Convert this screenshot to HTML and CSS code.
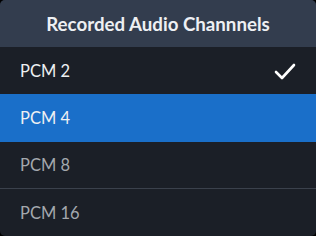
FILE: index.html
```html
<!DOCTYPE html>
<html>
<head>
<meta charset="utf-8">
<link rel="stylesheet" href="styles.css">
</head>
<body>
<div class="panel">
  <div class="header">Recorded Audio Channnels</div>
  <div class="item selected-check"><span>PCM 2</span>
    <svg class="check" width="22" height="18" viewBox="0 0 22 18"><path d="M2 10 L8 16 L20 3" fill="none" stroke="#ffffff" stroke-width="2.6" stroke-linecap="round" stroke-linejoin="round"/></svg>
  </div>
  <div class="item active"><span>PCM 4</span></div>
  <div class="item dim"><span>PCM 8</span></div>
  <div class="item dim sep"><span>PCM 16</span></div>
</div>
</body>
</html>
```
FILE: styles.css
```css
html, body { margin: 0; padding: 0; background: #000; }
body { width: 316px; height: 236px; overflow: hidden; font-family: Lato, "Noto Sans", sans-serif; }
.panel {
  width: 316px; height: 236px; background: #1b1f27;
  border-radius: 5px; overflow: hidden;
  display: flex; flex-direction: column;
}
.header {
  height: 47px; background: #333d4e; color: #eef0f3;
  font-weight: bold; font-size: 18.7px;
  display: flex; align-items: center; justify-content: center;
  padding-top: 1px; box-sizing: border-box;
}
.item {
  height: 47px; display: flex; align-items: center; justify-content: space-between;
  padding: 0 20px 0 20px; color: #eef0f2; font-size: 16.5px;
}
.item.active { background: #1a6fc9; height: 48px; }
.item.dim { color: #a4a8ae; height: 46px; }
.item.sep { border-top: 1px solid #3b414c; height: 47px; }
.check { display: block; margin-right: 0; }
```
